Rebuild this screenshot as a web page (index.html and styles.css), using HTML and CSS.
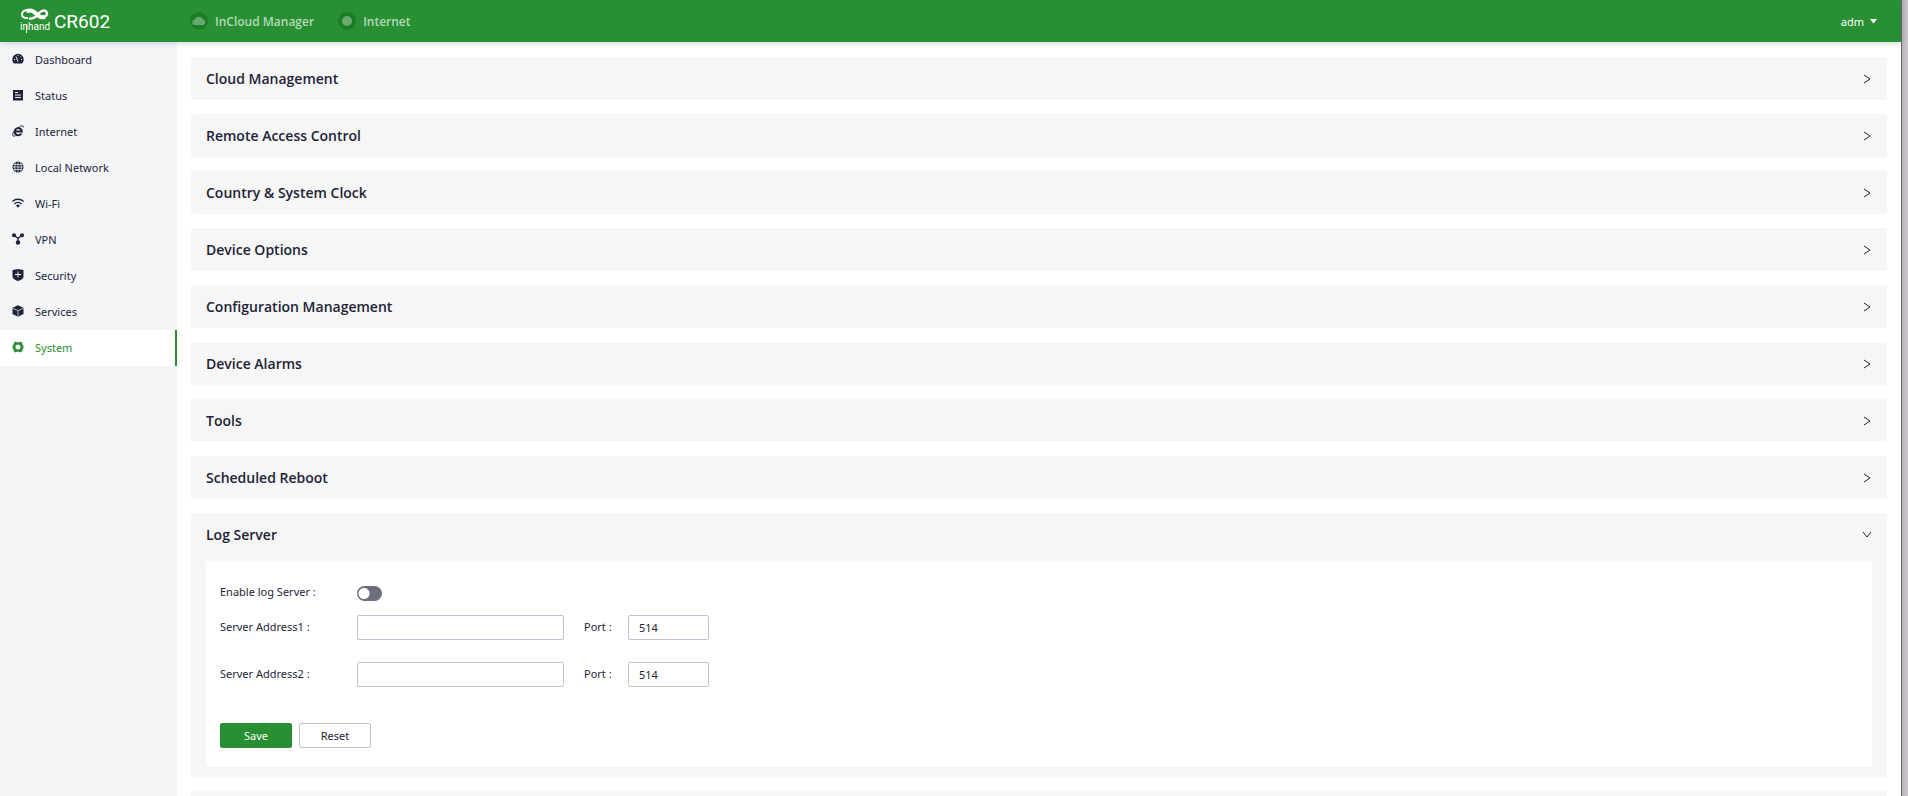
FILE: index.html
```html
<!DOCTYPE html>
<html lang="en">
<head>
    <meta charset="UTF-8">
    <meta name="viewport" content="width=device-width, initial-scale=1.0">
    <title>CR602 - System</title>
    <link rel="stylesheet" href="styles.css">
</head>
<body>
    <div class="page">
        <header class="header">
            <a class="brand" href="#">
                <svg class="logo" width="32" height="26" viewBox="0 0 32 26" role="img" aria-label="inhand">
                    <path d="M9 2.500C5 1.800 3 4 3 6.500c0 2.700 2.500 3.900 6 3.500" fill="none" stroke="#fff" stroke-width="2"/>
                    <path d="M7.500 3.500C12 .8 15 3.500 17.500 6S23 10 26 9" fill="none" stroke="#fff" stroke-width="4"/>
                    <path d="M10 10.500c6 1 7.500-3 10-5.500s6-3.500 7.500-1.200-.5 5.200-3.500 5.200" fill="none" stroke="#fff" stroke-width="2.400"/>
                    <text x="1" y="22" class="logo-text">inhand</text>
                    <path d="M7.500 17v8" stroke="#fff"/>
                </svg>
                <span class="model">CR602</span>
            </a>
            <div class="links">
                <a class="link" href="#">
                    <svg width="18" height="18" viewBox="0 0 18 18">
                        <circle cx="9" cy="9" r="9" fill="#1c7d27"/>
                        <path d="M5 13a2.500 2.500 0 0 1-.4-5A4.500 4.500 0 0 1 13 7.500 2.800 2.800 0 0 1 13 13z" fill="#68a96e"/>
                    </svg>
                    InCloud Manager
                </a>
                <a class="link" href="#">
                    <svg width="18" height="18" viewBox="0 0 18 18">
                        <circle cx="9" cy="9" r="9" fill="#1c7d27"/>
                        <circle cx="9" cy="9" r="5" fill="#68a96e"/>
                    </svg>
                    Internet
                </a>
            </div>
            <button class="user" type="button">adm
                <svg width="8" height="5" viewBox="0 0 8 5"><path d="M0 0h7L3.500 4.500z" fill="#fff"/></svg>
            </button>
        </header>

        <div class="layout">
            <nav class="sidebar">
                <a class="item" href="#">
                    <svg class="icon" viewBox="0 0 12 12"><path d="M6 .8A5.700 5.700 0 0 0 .3 6.500c0 1.700.7 3 1.700 4h8c1-1 1.700-2.300 1.700-4A5.700 5.700 0 0 0 6 .8z"/><path d="M6 8.500L4 3.500M2 6.500h1M9 6.500h1M6 2v1M8.800 3.500l-.8.800" class="cut"/></svg>
                    Dashboard
                </a>
                <a class="item" href="#">
                    <svg class="icon" viewBox="0 0 12 12"><path d="M1 1h10v10.500H1z"/><path d="M3 3.500h3M3 6h6M3 8.500h6" class="cut"/></svg>
                    Status
                </a>
                <a class="item" href="#">
                    <svg class="icon" viewBox="0 0 12 12"><path d="M3 6.500h6.800A3.600 3.600 0 1 0 9.300 8.500" class="line bold"/><path d="M7.500 1.500c2.500-1.200 4.200-1 3.600 1M1.800 6.500C0 9.500.2 12 3.500 10.800" class="line"/></svg>
                    Internet
                </a>
                <a class="item" href="#">
                    <svg class="icon" viewBox="0 0 12 12"><circle cx="6" cy="6" r="5.500"/><path d="M6 1v10M1 6h10M3.500 1.500C2.500 4 2.500 8 3.500 10.500M8.500 1.500c1 2.500 1 6.500 0 9M1.500 3.500h9M1.500 8.500h9" class="cut thin"/></svg>
                    Local Network
                </a>
                <a class="item" href="#">
                    <svg class="icon" viewBox="0 0 12 12"><path d="M.3 4.600a8.200 8.200 0 0 1 11.400 0M2.400 6.900a5.200 5.200 0 0 1 7.200 0" class="line wide"/><path d="M3.900 8.500a3 3 0 0 1 4.200 0L6 10.700z"/></svg>
                    Wi-Fi
                </a>
                <a class="item" href="#">
                    <svg class="icon" viewBox="0 0 12 12"><circle cx="2" cy="2.300" r="2"/><circle cx="10" cy="2.300" r="2"/><circle cx="6" cy="9.500" r="2.200"/><path d="M2 2.300l4 3 4-3M6 5.300v4" class="line wide"/></svg>
                    VPN
                </a>
                <a class="item" href="#">
                    <svg class="icon" viewBox="0 0 12 12"><path d="M6 0l5.500 1v6.500C11.500 9.500 9 11 6 12 3 11 .5 9.500.5 7.500V1z"/><path d="M6 2.500v6M3 5.500h6" class="cut"/></svg>
                    Security
                </a>
                <a class="item" href="#">
                    <svg class="icon" viewBox="0 0 12 12"><path d="M6 .3l5.500 2.400v6.400L6 11.800.5 9.100V2.700z"/><path d="M.5 3.200L6 5.600l5.500-2.400M6 5.600v6" class="cut thin"/></svg>
                    Services
                </a>
                <a class="item active" href="#">
                    <svg class="icon" viewBox="0 0 12 12"><path fill-rule="evenodd" d="M3.500.6l1.200.6h2.600L8.500.6l1.600 1 .1 1.500 1.300 2v1.800l-1.300 2-.1 1.500-1.600 1-1.200-.6H4.700l-1.200.6-1.600-1-.1-1.500-1.300-2V5.100l1.300-2 .1-1.500zM6 3.500a2.500 2.500 0 1 0 0 5 2.500 2.500 0 0 0 0-5z"/></svg>
                    System
                </a>
            </nav>

            <main class="content">
                <section class="panel"><button class="panel-head" type="button">Cloud Management<svg class="arrow" viewBox="0 0 10 10"><path d="M2 1l6 4-6 4"/></svg></button></section>
                <section class="panel"><button class="panel-head" type="button">Remote Access Control<svg class="arrow" viewBox="0 0 10 10"><path d="M2 1l6 4-6 4"/></svg></button></section>
                <section class="panel"><button class="panel-head" type="button">Country &amp; System Clock<svg class="arrow" viewBox="0 0 10 10"><path d="M2 1l6 4-6 4"/></svg></button></section>
                <section class="panel"><button class="panel-head" type="button">Device Options<svg class="arrow" viewBox="0 0 10 10"><path d="M2 1l6 4-6 4"/></svg></button></section>
                <section class="panel"><button class="panel-head" type="button">Configuration Management<svg class="arrow" viewBox="0 0 10 10"><path d="M2 1l6 4-6 4"/></svg></button></section>
                <section class="panel"><button class="panel-head" type="button">Device Alarms<svg class="arrow" viewBox="0 0 10 10"><path d="M2 1l6 4-6 4"/></svg></button></section>
                <section class="panel"><button class="panel-head" type="button">Tools<svg class="arrow" viewBox="0 0 10 10"><path d="M2 1l6 4-6 4"/></svg></button></section>
                <section class="panel"><button class="panel-head" type="button">Scheduled Reboot<svg class="arrow" viewBox="0 0 10 10"><path d="M2 1l6 4-6 4"/></svg></button></section>
                <section class="panel open">
                    <button class="panel-head" type="button">Log Server<svg class="arrow" viewBox="0 0 10 10"><path d="M1 2l4 5 4-5"/></svg></button>
                    <form class="panel-body">
                        <div class="row">
                            <label class="label" for="enable">Enable log Server :</label>
                            <input class="switch" type="checkbox" id="enable">
                        </div>
                        <div class="row server">
                            <label class="label" for="addr1">Server Address1 :</label>
                            <input class="text" type="text" id="addr1">
                            <label class="port-label" for="port1">Port :</label>
                            <input class="text port" type="text" id="port1" value="514">
                        </div>
                        <div class="row server">
                            <label class="label" for="addr2">Server Address2 :</label>
                            <input class="text" type="text" id="addr2">
                            <label class="port-label" for="port2">Port :</label>
                            <input class="text port" type="text" id="port2" value="514">
                        </div>
                        <div class="actions">
                            <button class="btn primary" type="button">Save</button>
                            <button class="btn" type="reset">Reset</button>
                        </div>
                    </form>
                </section>
                <section class="panel next"></section>
            </main>
        </div>
    </div>
</body>
</html>
```

FILE: styles.css
```css
* {
    box-sizing: border-box;
}

body {
    margin: 0;
    height: 100vh;
    overflow: hidden;
    padding-right: 7px;
    background: linear-gradient(to right, #b9b4b8, #cdc6cc) right / 6px 100% no-repeat #67656a;
    font-family: "Noto Sans", "Open Sans", sans-serif;
    font-size: 11px;
    color: #1e2337;
}

a {
    color: inherit;
    text-decoration: none;
}

button,
input {
    font: inherit;
    color: inherit;
}

.page {
    height: 100%;
    display: flex;
    flex-direction: column;
    background: #fff;
}

.header {
    display: flex;
    align-items: center;
    flex: none;
    height: 42px;
    padding: 0 23px 0 19px;
    background: #289033;
    color: #fff;
    box-shadow: 0 1px 6px rgba(30, 35, 80, 0.2);
    z-index: 1;
}

.brand {
    display: flex;
    align-items: center;
    gap: 3px;
    width: 171px;
}

.logo-text {
    font-family: Roboto, sans-serif;
    font-size: 10px;
    fill: #fff;
}

.model {
    font-family: Roboto, sans-serif;
    font-size: 19px;
}

.links {
    display: flex;
    gap: 24px;
    flex: 1;
}

.link {
    display: flex;
    align-items: center;
    gap: 7px;
    font-family: "Open Sans", sans-serif;
    font-size: 12px;
    font-weight: 600;
    color: #b3d8b6;
}

.user {
    display: flex;
    align-items: center;
    gap: 6px;
    padding: 0;
    border: none;
    background: none;
    color: #fff;
}

.layout {
    flex: 1;
    display: flex;
    min-height: 0;
}

.sidebar {
    flex: none;
    width: 177px;
    background: #f3f5f7;
}

.item {
    display: flex;
    align-items: center;
    gap: 11px;
    height: 36px;
    padding: 0 0 2px 12px;
}

.item.active {
    background: #fff;
    border-right: 2px solid #289033;
    color: #289033;
}

.icon {
    width: 12px;
    height: 12px;
    fill: currentColor;
}

.icon .cut {
    fill: none;
    stroke: #f3f5f7;
}

.icon .thin {
    stroke-width: 0.7;
}

.icon .line {
    fill: none;
    stroke: currentColor;
}

.icon .wide {
    stroke-width: 1.4;
}

.icon .bold {
    stroke-width: 2;
}

.content {
    flex: 1;
    min-width: 0;
    padding: 15px 14px 0;
    overflow: hidden;
}

.panel {
    margin-bottom: 14px;
    background: #f6f6f6;
    border-radius: 2px;
}

.panel.open {
    padding-bottom: 11px;
}

.panel.next {
    height: 43px;
}

.panel-head {
    display: flex;
    justify-content: space-between;
    align-items: center;
    width: 100%;
    height: 43px;
    padding: 0 15px;
    border: none;
    background: none;
    font-family: "Open Sans", sans-serif;
    font-size: 14px;
    font-weight: 600;
}

.arrow {
    width: 10px;
    height: 10px;
    fill: none;
    stroke: #1e2337;
    overflow: visible;
}

.panel-body {
    margin: 5px 15px 0;
    padding: 19px 14px 18px;
    background: #fff;
}

.row {
    display: flex;
    align-items: center;
    height: 25px;
    margin-bottom: 10px;
}

.row.server {
    margin-bottom: 22px;
}

.label,
.port-label {
    padding-bottom: 2px;
}

.label {
    width: 137px;
}

.text {
    width: 207px;
    height: 25px;
    padding: 0 10px;
    border: 1px solid #c0c4d2;
    border-radius: 2px;
    background: #fff;
}

.text.port {
    width: 81px;
}

.port-label {
    width: 64px;
    padding-left: 20px;
}

.switch {
    appearance: none;
    width: 25px;
    height: 15px;
    margin: 2px 0 0;
    border-radius: 8px;
    background: radial-gradient(circle at 7px 50%, #fff 5px, #6c6e7d 6px);
}

.actions {
    display: flex;
    gap: 7px;
    padding-top: 14px;
}

.btn {
    width: 72px;
    height: 25px;
    padding: 0;
    border: 1px solid #c0c4d2;
    border-radius: 2px;
    background: #fff;
}

.btn.primary {
    border-color: #289033;
    background: #289033;
    color: #fff;
}
```
